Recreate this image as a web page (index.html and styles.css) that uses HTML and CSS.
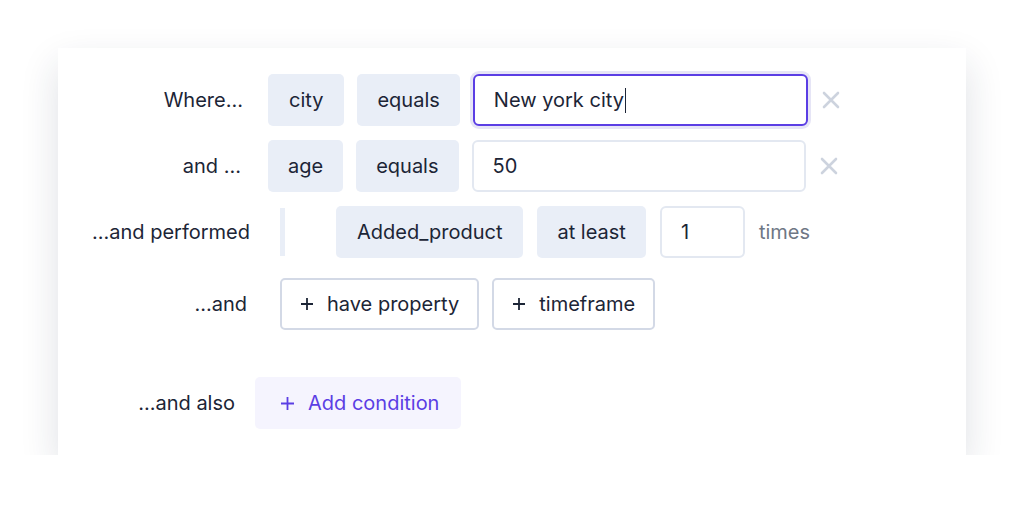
FILE: index.html
```html
<!DOCTYPE html>
<html lang="en">
<head>
    <meta charset="UTF-8">
    <meta name="viewport" content="width=device-width, initial-scale=1.0">
    <title>Segment conditions</title>
    <link rel="stylesheet" href="styles.css">
</head>
<body>
    <div class="card">
        <div class="row row-where">
            <div class="label">Where...</div>
            <div class="chip chip-city">city</div>
            <div class="chip">equals</div>
            <div class="field field-wide field-focus">New york city<span class="caret"></span></div>
            <button class="remove" aria-label="Remove">
                <svg width="18" height="18" viewBox="0 0 18 18"><path d="M2 2 L16 16 M16 2 L2 16" stroke="currentColor" stroke-width="2.6" stroke-linecap="round"/></svg>
            </button>
        </div>

        <div class="row row-and">
            <div class="label">and ...</div>
            <div class="chip">age</div>
            <div class="chip">equals</div>
            <div class="field field-wide">50</div>
            <button class="remove" aria-label="Remove">
                <svg width="18" height="18" viewBox="0 0 18 18"><path d="M2 2 L16 16 M16 2 L2 16" stroke="currentColor" stroke-width="2.6" stroke-linecap="round"/></svg>
            </button>
        </div>

        <div class="row row-event">
            <div class="label">...and performed</div>
            <div class="divider"></div>
            <div class="chip chip-event">Added_product</div>
            <div class="chip">at least</div>
            <div class="field field-small">1</div>
            <div class="muted">times</div>
        </div>

        <div class="row row-extra">
            <div class="label">...and</div>
            <button class="outline-btn">
                <svg class="plus" width="12" height="12" viewBox="0 0 12 12"><path d="M6 0 V12 M0 6 H12" stroke="currentColor" stroke-width="1.8"/></svg>
                have property
            </button>
            <button class="outline-btn">
                <svg class="plus" width="12" height="12" viewBox="0 0 12 12"><path d="M6 0 V12 M0 6 H12" stroke="currentColor" stroke-width="1.8"/></svg>
                timeframe
            </button>
        </div>

        <div class="row row-also">
            <div class="label">...and also</div>
            <button class="add-btn">
                <svg class="plus" width="13" height="13" viewBox="0 0 13 13"><path d="M6.5 0 V13 M0 6.5 H13" stroke="currentColor" stroke-width="1.8"/></svg>
                Add condition
            </button>
        </div>
    </div>
</body>
</html>
```

FILE: styles.css
```css
:root {
    --text: #1c2536;
    --muted: #6f7785;
    --chip: #e9eef7;
    --border: #e3e8f1;
    --border-strong: #d3d9e6;
    --accent: #5b3ee4;
    --accent-soft: #f5f4fe;
    --icon: #cdd3de;
}

* {
    margin: 0;
    padding: 0;
    box-sizing: border-box;
}

body {
    font-family: 'Inter', 'Noto Sans', sans-serif;
    font-size: 20px;
    color: var(--text);
    background: #fff;
}

.card {
    width: 908px;
    height: 407px;
    margin: 48px 0 0 58px;
    padding-top: 26px;
    background: #fff;
    box-shadow: 0 16px 36px rgba(30, 40, 70, 0.14);
}

.row {
    display: flex;
    align-items: center;
    gap: 13px;
    height: 52px;
    margin-bottom: 14px;
}

.label {
    width: 185px;
    text-align: right;
    margin-right: 12px;
    white-space: nowrap;
}

.row-and .label {
    width: 183px;
    margin-right: 14px;
}

.row-event {
    gap: 14px;
}

.row-event .label {
    width: 192px;
    margin-right: 16px;
}

.row-extra {
    margin-top: 20px;
    margin-bottom: 47px;
}

.row-extra .label {
    width: 189px;
    margin-right: 20px;
}

.row-also .label {
    width: 177px;
    margin-right: 7px;
}

.chip {
    height: 52px;
    padding: 0 20px;
    display: flex;
    align-items: center;
    background: var(--chip);
    border-radius: 5px;
}

.chip-city,
.chip-event {
    padding: 0 21px;
}

.field {
    height: 52px;
    padding: 0 19px;
    display: flex;
    align-items: center;
    background: #fff;
    border: 2px solid var(--border);
    border-radius: 6px;
}

.field-wide {
    width: 334px;
}

.field-focus {
    width: 335px;
    border-color: var(--accent);
    box-shadow: 0 0 0 3px #e6e5f6;
}

.caret {
    display: inline-block;
    width: 1.5px;
    height: 25px;
    margin-left: 1px;
    background: var(--text);
}

.remove {
    border: none;
    background: none;
    color: var(--icon);
    display: flex;
    margin-left: 1px;
}

.divider {
    width: 5px;
    height: 48px;
    background: var(--chip);
    margin-right: 37px;
}

.field-small {
    width: 85px;
}

.muted {
    color: var(--muted);
}

button {
    font-family: inherit;
    font-size: 20px;
    cursor: pointer;
}

.outline-btn {
    height: 52px;
    padding: 0 18px 0 19px;
    display: flex;
    align-items: center;
    background: #fff;
    color: var(--text);
    border: 2px solid var(--border-strong);
    border-radius: 5px;
}

.plus {
    flex: none;
    margin-right: 14px;
}

.add-btn {
    height: 52px;
    padding: 0 22px 0 26px;
    display: flex;
    align-items: center;
    background: var(--accent-soft);
    color: var(--accent);
    border: none;
    border-radius: 5px;
}
```
